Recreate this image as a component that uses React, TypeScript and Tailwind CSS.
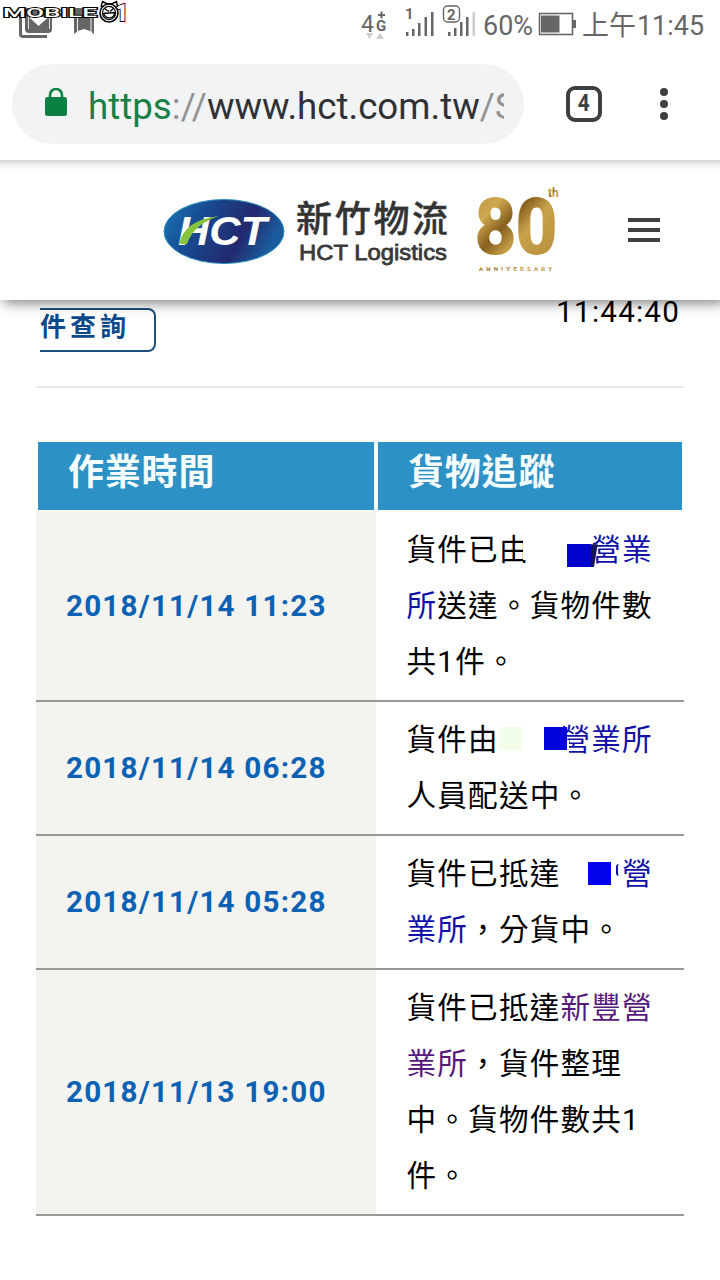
import React from "react";

const sans = "font-['Roboto','Noto_Sans_CJK_TC',sans-serif]";

function Watermark() {
  return (
    <svg className="absolute left-0 top-0" width="140" height="30" viewBox="0 0 140 30">
      <g
        fontFamily="Roboto, sans-serif"
        fontWeight="500"
        stroke="#000"
        strokeWidth="1.8"
        fill="#fff"
        paintOrder="stroke"
      >
        <text x="3" y="17" fontSize="13.500" textLength="94" lengthAdjust="spacingAndGlyphs">
          MOBILE
        </text>
        <text x="115" y="20.500" fontSize="23" fontWeight="900">
          1
        </text>
      </g>
      <path d="M101 7l1.500-5.500 5 2.500h4l5-2.500 1 5.500" fill="#fff" stroke="#000" strokeWidth="1.4" />
      <circle cx="109" cy="13" r="9" fill="#fff" stroke="#000" strokeWidth="1.6" />
      <circle cx="109" cy="13" r="6.600" fill="#fff" stroke="#000" strokeWidth="1.2" />
      <path d="M104.500 8.500l4.500 3M114 8l-4 3.500M103.500 13.500l11-1c0 6-8 8-11 1z" fill="none" stroke="#000" strokeWidth="1.3" />
    </svg>
  );
}

function StatusBar() {
  return (
    <div className="relative h-12 w-full">
      <svg width="720" height="48" viewBox="0 0 720 48" fill="#666">
        <path d="M19 14h3v20q0 1 1 1h24v3H23q-4 0-4-4z" />
        <path d="M25 8h27v21q0 4-4 4H29q-4 0-4-4z" />
        <path d="M30 17v1l8.500 8 9-8v-1z" fill="#fff" />
        <path d="M28.500 15v14M49.500 15v14" stroke="#fff" strokeWidth="0.8" />
        <path d="M74 8h20v26l-4-3-6-2-6 2-4 3z" />
        <path d="M77.500 15v18M91 15v18" stroke="#fff" strokeWidth="0.9" />
        <path d="M80 34l4-3 4 3z" fill="#fff" />
        <g fontFamily="Roboto, 'Noto Sans CJK TC', sans-serif">
          <text x="361" y="32" fontSize="24" textLength="13" lengthAdjust="spacingAndGlyphs">4</text>
          <text x="376" y="31" fontSize="15" fontWeight="700">G</text>
          <text x="405" y="19" fontSize="15" fontWeight="700">1</text>
          <text x="447" y="20" fontSize="15" fontWeight="700">2</text>
          <text x="483" y="35" fontSize="27.500" textLength="50" lengthAdjust="spacingAndGlyphs">60%</text>
          <text x="582" y="35" fontSize="27">上午</text>
          <text x="637" y="35" fontSize="27.500" textLength="67" lengthAdjust="spacingAndGlyphs">11:45</text>
        </g>
        <path d="M378 14h2.500v-2.500h2V14h2.500v2h-2.500v2.500h-2V16H378z" />
        <path d="M366 33h7l-3.500 6zM376 39h8l-4-6z" fill="#ccc" />
        <path d="M406 32h2.500v4H406zM412 29h2.500v7H412zM418 23h2.500v13H418zM424.500 17h2.500v19h-2.500zM431 12h2.500v24H431z" />
        <path d="M448 32h2.500v4H448zM454 28h2.500v8H454zM460 22h2.500v14H460zM466 17h2.500v19H466z" />
        <path d="M472.500 12h2.500v24h-2.500z" fill="#ccc" />
        <rect x="443.500" y="6" width="16" height="16" rx="4" fill="none" stroke="#666" strokeWidth="1.4" />
        <rect x="539.500" y="13.500" width="33" height="21" fill="none" stroke="#666" strokeWidth="1.6" />
        <path d="M541 15.500h18.500v17H541zM573 20h3v8h-3z" />
      </svg>
      <Watermark />
    </div>
  );
}

function AddressBar() {
  return (
    <div className="relative z-20 flex h-28 w-full items-start bg-white pl-3 pt-4">
      <div className="flex h-20 w-[512px] items-center rounded-full bg-[#f1f3f4] pl-8">
        <svg className="mb-1" width="24" height="30" viewBox="0 0 24 30">
          <rect x="1" y="10" width="22" height="19" rx="2.500" fill="#0b8043" />
          <path d="M6 11V8a6 6 0 0 1 12 0v3" fill="none" stroke="#0b8043" strokeWidth="2.6" />
        </svg>
        <div className="ml-[20px] mt-[5px] w-[416px] overflow-hidden whitespace-nowrap text-[36.7px] leading-[48px] text-[#303134]">
          <span className="text-[#188045]">https</span>
          <span className="text-[#919395]">://</span>www.hct.com.tw
          <span className="text-[#919395]">/S</span>
        </div>
      </div>
      <div className="ml-[42px] mt-[22px] flex size-9 items-center justify-center rounded-[9px] border-4 border-[#3c4043] text-[23px] font-bold text-[#3c4043]">
        <span className="scale-x-90">4</span>
      </div>
      <div className="ml-[58px] mt-6 flex flex-col gap-1">
        <span className="size-2 rounded-full bg-[#3c4043]" />
        <span className="size-2 rounded-full bg-[#3c4043]" />
        <span className="size-2 rounded-full bg-[#3c4043]" />
      </div>
    </div>
  );
}

function SiteHeader() {
  return (
    <header className="relative z-10 flex h-[140px] w-full items-start bg-white shadow-[4px_3px_12px_rgba(0,0,0,0.5)]">
      <svg width="720" height="140" viewBox="0 160 720 140">
        <defs>
          <linearGradient id="top" x2="0" y2="1">
            <stop offset="0" stopColor="#d6d6d6" />
            <stop offset="0.4" stopColor="#f2f2f2" />
            <stop offset="1" stopColor="#fff" />
          </linearGradient>
          <linearGradient id="oval" x2="1" y2="0.3">
            <stop offset="0" stopColor="#1a78b8" />
            <stop offset="0.35" stopColor="#174b92" />
            <stop offset="0.75" stopColor="#22296f" />
            <stop offset="1" stopColor="#1b5a9c" />
          </linearGradient>
          <linearGradient id="gold" x2="1" y2="1">
            <stop offset="0" stopColor="#b08a3c" />
            <stop offset="0.25" stopColor="#d0a850" />
            <stop offset="0.42" stopColor="#86601f" />
            <stop offset="0.58" stopColor="#c9a14b" />
            <stop offset="0.8" stopColor="#bd943f" />
            <stop offset="1" stopColor="#99712b" />
          </linearGradient>
        </defs>
        <rect y="160" width="720" height="12" fill="url(#top)" />
        <ellipse cx="224" cy="231.500" rx="60" ry="32" fill="url(#oval)" stroke="#2a90bd" strokeWidth="1" />
        <text
          x="178"
          y="245"
          fill="#fff"
          fontFamily="'Liberation Sans', sans-serif"
          fontSize="40"
          fontWeight="700"
          fontStyle="italic"
          textLength="89"
          lengthAdjust="spacingAndGlyphs"
        >
          HCT
        </text>
        <path d="M179 244c4-15 15-25 40-28-17 6-27 14-32 28z" fill="#86c440" />
        <text
          x="296"
          y="232"
          fill="#333"
          stroke="#333"
          strokeWidth="0.4"
          fontFamily="'Noto Sans CJK TC', sans-serif"
          fontSize="36"
          fontWeight="500"
          letterSpacing="2.700"
        >
          新竹物流
        </text>
        <text
          x="299"
          y="259.500"
          fill="#3a3a3a"
          stroke="#3a3a3a"
          strokeWidth="0.8"
          fontFamily="'Liberation Sans', sans-serif"
          fontSize="22"
          textLength="148"
          lengthAdjust="spacingAndGlyphs"
        >
          HCT Logistics
        </text>
        <g fontFamily="Roboto, sans-serif" fill="url(#gold)">
          <text x="475" y="253" fontSize="76" fontWeight="700" stroke="url(#gold)" strokeWidth="2" textLength="82" lengthAdjust="spacingAndGlyphs">
            80
          </text>
          <text x="548" y="197" fontSize="12" fontWeight="700">th</text>
          <text x="479" y="270.500" fontSize="6" fontWeight="700" textLength="73">ANNIVERSARY</text>
        </g>
        <path d="M628 218h32v4h-32zM628 228h32v4h-32zM628 238h32v4h-32z" fill="#404040" />
      </svg>
    </header>
  );
}

function Masked({ children }: { children?: React.ReactNode }) {
  return (
    <span className="relative inline-block h-[30px] w-[61.6px] align-middle">{children}</span>
  );
}

function Row({ time, children }: { time: string; children: React.ReactNode }) {
  return (
    <div className="flex border-b-2 border-[#999]">
      <div className="flex w-[340px] items-center bg-[#f3f4f0] pl-[30px] font-bold text-[#0b62b4]">
        {time}
      </div>
      <div className="w-[308px] whitespace-nowrap py-[10px] pl-[30.5px] leading-[56px] text-black">
        {children}
      </div>
    </div>
  );
}

export default function App() {
  return (
    <div className={`h-[1280px] w-[720px] overflow-hidden bg-white ${sans}`}>
      <StatusBar />
      <AddressBar />
      <SiteHeader />
      <main className="px-9 text-[29.6px] tracking-[1.2px]">
        <div className="flex h-[88px] justify-between border-b-2 border-[#e8e8e8] pl-1 pr-1">
          <div className="mt-2 h-11 w-[116px] rounded-r-lg border-2 border-l-0 border-[#1d4f80] text-[26px] font-bold leading-[34px] tracking-[4px] text-[#0d4a8c]">
            件查詢
          </div>
          <div className="-mt-2 leading-10 text-black">11:44:40</div>
        </div>
        <div className="mt-[54px] flex gap-1 px-0.5 text-[36px] font-bold leading-[62px] tracking-[0.8px] text-[#f4feff]">
          <div className="h-[68px] w-[336px] bg-[#2e91c5] pl-[30px]">作業時間</div>
          <div className="h-[68px] w-[304px] bg-[#2e91c5] pl-[30px]">貨物追蹤</div>
        </div>
        <div className="mt-0.5">
          <Row time="2018/11/14 11:23">
            貨件已由
            <Masked>
              <span className="absolute -left-[7px] -top-1 h-[27px] w-2 bg-white" />
              <span className="absolute left-[37px] top-[7px] h-[23px] w-[31px] bg-[#15155c] [clip-path:polygon(0_0,100%_0,88%_100%,0_100%)]" />
              <span className="absolute left-[37px] top-[7px] h-[23px] w-[24px] bg-[#0202cd]" />
            </Masked>
            <span className="text-[#1111a8]">營業</span>
            <br />
            <span className="text-[#1111a8]">所</span>送達。貨物件數
            <br />
            共1件。
          </Row>
          <Row time="2018/11/14 06:28">
            貨件由
            <Masked>
              <span className="absolute left-0 top-0 h-[23px] w-[23px] bg-[#f3feea]" />
              <span className="absolute left-[61px] top-[13px] z-10 h-[20px] w-[9px] bg-white" />
              <span className="absolute left-[45px] top-0 z-10 h-[23px] w-[23px] bg-[#0202dc]" />
            </Masked>
            <span className="text-[#1111a8]">營業所</span>
            <br />
            人員配送中。
          </Row>
          <Row time="2018/11/14 05:28">
            貨件已抵達
            <Masked>
              <span className="absolute left-[28px] top-[1px] h-[23px] w-[23px] bg-[#0202ec]" />
              <span className="absolute left-[56px] top-[3px] h-[12px] w-[3px] rounded-l-full border-l-2 border-[#1111a8]" />
            </Masked>
            <span className="text-[#1111a8]">營</span>
            <br />
            <span className="text-[#1111a8]">業所</span>，分貨中。
          </Row>
          <Row time="2018/11/13 19:00">
            貨件已抵達<span className="text-[#551a7b]">新豐營</span>
            <br />
            <span className="text-[#551a7b]">業所</span>，貨件整理
            <br />
            中。貨物件數共1
            <br />
            件。
          </Row>
        </div>
      </main>
    </div>
  );
}
